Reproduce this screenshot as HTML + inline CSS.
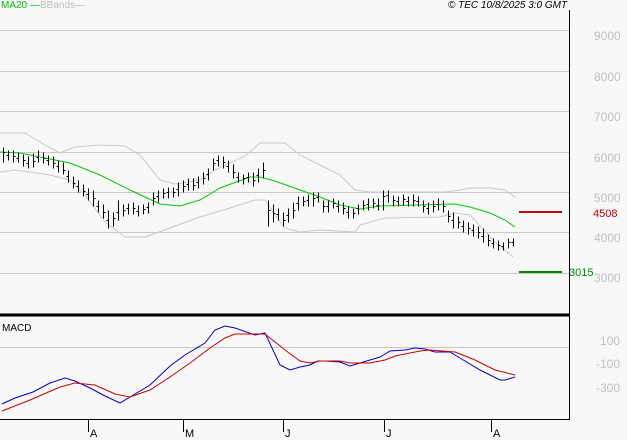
<!DOCTYPE html>
<html><head><meta charset="utf-8"><style>
body{margin:0;background:#f8f8f8;}
svg{display:block;font-family:"Liberation Sans",sans-serif;}
</style></head><body>
<svg width="627" height="440" viewBox="0 0 627 440" xmlns="http://www.w3.org/2000/svg">
<rect width="627" height="440" fill="#f8f8f8"/>
<g stroke="#c8c8c8" stroke-width="1">
<line x1="0" y1="30.5" x2="569" y2="30.5"/>
<line x1="0" y1="71.5" x2="569" y2="71.5"/>
<line x1="0" y1="111.5" x2="569" y2="111.5"/>
<line x1="0" y1="152.5" x2="569" y2="152.5"/>
<line x1="0" y1="192.5" x2="569" y2="192.5"/>
<line x1="0" y1="232.5" x2="569" y2="232.5"/>
<line x1="0" y1="273.5" x2="569" y2="273.5"/>
<line x1="0" y1="347.5" x2="569" y2="347.5"/>
</g>
<line x1="569.5" y1="10" x2="569.5" y2="420" stroke="#000"/>
<line x1="0" y1="315" x2="570" y2="315" stroke="#000" stroke-width="3"/>
<line x1="0" y1="419.5" x2="570" y2="419.5" stroke="#000"/>
<g stroke="#000"><line x1="88.5" y1="419" x2="88.5" y2="432"/><line x1="183.5" y1="419" x2="183.5" y2="432"/><line x1="283.5" y1="419" x2="283.5" y2="432"/><line x1="384.5" y1="419" x2="384.5" y2="432"/><line x1="491.5" y1="419" x2="491.5" y2="432"/></g>
<g font-size="11" fill="#000"><text x="90" y="437">A</text><text x="185" y="437">M</text><text x="285" y="437">J</text><text x="386" y="437">J</text><text x="493" y="437">A</text></g>
<text x="1" y="8" font-size="10" fill="#00c000">MA20 —</text>
<text x="40" y="8" font-size="10" fill="#c0c0c0">BBands—</text>
<text x="448" y="8" font-size="10" font-style="italic" fill="#000">© TEC 10/8/2025 3:0 GMT</text>
<text x="2" y="331" font-size="10" fill="#000">MACD</text>
<g font-size="12" fill="#c0c0c0">
<text x="594" y="40">9000</text><text x="594" y="81">8000</text><text x="594" y="121">7000</text><text x="594" y="162">6000</text><text x="594" y="202">5000</text><text x="594" y="242">4000</text><text x="594" y="282">3000</text>
<text x="600" y="345">100</text><text x="596" y="368">-100</text><text x="596" y="392">-300</text>
</g>
<line x1="519" y1="212" x2="562" y2="212" stroke="#cc0000" stroke-width="2"/>
<text x="593" y="217" font-size="11" fill="#cc0000">4508</text>
<line x1="519" y1="272" x2="562" y2="272" stroke="#008800" stroke-width="2"/>
<text x="569" y="276" font-size="11" fill="#008800">3015</text>
<g fill="none" stroke="#c8c8c8">
<polyline points="0,133 25,133 45,145 60,153 75,147 100,145 125,146 140,155 160,180 175,184 200,180 215,170 245,156 260,143 285,143 300,155 320,165 340,175 355,190 370,192 445,192 460,190 470,188 490,188 505,190 515,197"/>
<polyline points="0,172 15,170 30,172 50,175 70,180 85,195 105,222 125,237 145,237 170,228 200,217 230,208 255,200 265,200 275,215 285,228 300,232 320,230 355,232 360,225 385,218 440,217 455,213 470,215 493,240 513,257"/>
</g>
<polyline fill="none" stroke="#00cc00" points="0,152 20,153 40,157 70,163 100,175 130,190 160,204 180,206 200,200 220,188 250,177 260,177 275,181 300,190 320,197 340,205 360,209 380,206 455,204 470,207 490,213 505,220 515,227"/>
<g transform="translate(0.5,0.5)">
<path fill="none" stroke="#000" shape-rendering="crispEdges" d="
M3,147V162M3,152H5M8,150V160M6,155H8M13,150V162M13,156H15M18,152V162M16,158H18M23,154V166M23,160H25M28,156V168M26,163H28M33,153V167M33,161H35M38,150V162M36,157H38M43,152V163M43,158H45M48,155V165M46,160H48M53,156V168M53,163H55M58,160V172M56,166H58M63,162V174M63,170H65M68,170V182M66,176H68M73,176V188M73,183H75M78,180V192M76,186H78M83,184V196M83,191H85M88,188V200M86,194H88M93,190V206M93,198H95M98,200V212M96,206H98M103,204V218M103,212H105M108,210V228M106,220H108M113,212V226M113,218H115M118,200V220M116,212H118M123,204V216M123,210H125M128,203V214M126,208H128M133,202V214M133,208H135M138,205V216M136,211H138M143,204V214M143,209H145M148,202V213M146,207H148M153,192V205M153,198H155M158,190V202M156,196H158M163,188V198M163,193H165M168,187V198M166,192H168M173,187V197M173,192H175M178,182V196M176,189H178M183,180V192M183,186H185M188,178V190M186,184H188M193,178V190M193,185H195M198,176V188M196,182H198M203,172V184M203,178H205M208,168V180M206,174H208M213,158V170M213,163H215M218,155V166M216,160H218M223,156V168M223,162H225M228,160V172M226,166H228M233,164V178M233,172H235M238,172V182M236,177H238M243,174V184M243,178H245M248,172V182M246,177H248M253,172V186M253,180H255M258,168V182M256,175H258M263,162V178M263,170H265
M268,200V226M268,210H270M273,204V222M273,213H275M278,208V220M276,214H278M283,212V226M283,220H285M288,208V222M286,215H288M293,202V218M293,210H295M298,196V210M296,203H298M303,196V206M303,201H305M308,194V206M306,200H308M313,192V206M313,198H315M318,192V202M316,197H318M323,200V212M323,206H325M328,200V212M326,206H328M333,198V208M333,203H335M338,200V212M336,206H338M343,202V214M343,208H345M348,206V218M346,212H348M353,208V218M353,213H355M358,204V214M356,208H358M363,200V210M363,205H365M368,198V210M366,204H368M373,198V208M373,203H375M378,198V210M376,205H378M383,190V210M383,196H385M388,190V202M386,195H388M393,195V206M393,200H395M398,196V206M396,201H398M403,194V205M403,199H405M408,196V206M406,201H408M413,194V206M413,200H415M418,196V206M416,201H418M423,200V212M423,206H425M428,202V214M426,208H428M433,200V212M433,206H435M438,198V210M436,204H438M443,200V212M443,206H445M448,210V222M448,216H450M453,212V228M451,220H453M458,216V228M458,222H460M463,220V232M461,226H463M468,222V234M468,228H470M473,224V236M471,230H473M478,226V238M478,232H480M483,228V242M481,236H483M488,234V246M488,240H490M493,238V248M491,243H493M498,240V250M498,245H500M503,242V250M501,246H503M508,238V248M508,242H510M513,238V246M511,242H513"/>
</g>
<polyline fill="none" stroke="#0000cc" points="2,404 15,398 33,392 50,383 65,378 75,381 90,388 105,396 120,403 130,397 150,385 170,366 185,355 205,343 215,330 225,326 235,328 255,335 265,333 280,365 290,370 300,367 310,365 318,361 325,361 340,362 350,366 360,363 370,360 380,357 385,354 390,351 405,350 415,348 425,349 435,352 450,352 460,358 480,370 500,380 505,380 515,377"/>
<polyline fill="none" stroke="#cc0000" points="2,411 30,400 60,387 75,383 95,385 115,394 130,397 150,390 170,377 190,363 210,348 225,338 235,334 265,334 285,350 300,361 310,363 320,361 340,361 350,363 370,363 385,360 395,356 410,353 420,351 430,350 455,352 475,360 495,370 515,375"/>
</svg>
</body></html>
